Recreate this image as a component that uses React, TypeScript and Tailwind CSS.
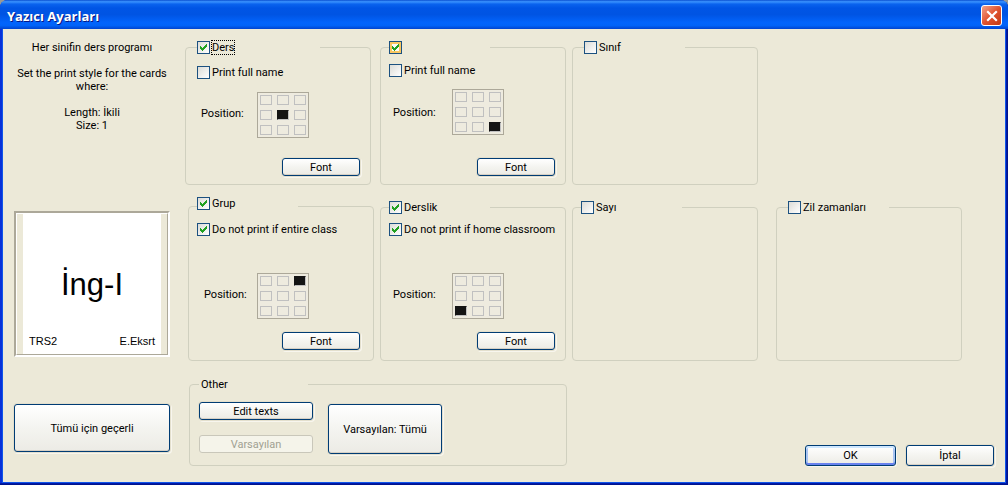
import { useState } from 'react';
import type { ReactNode } from 'react';

type CheckProps = {
    label: string;
    name?: string;
    initial?: boolean;
    hot?: boolean;
    focused?: boolean;
};

const Check = ({ label, name, initial = false, hot = false, focused = false }: CheckProps) => {
    const [checked, setChecked] = useState(initial);

    return (
        <label className="flex h-[13px] items-start gap-[2px] whitespace-nowrap">
            <span className="grid size-[13px] shrink-0">
                <input
                    type="checkbox"
                    aria-label={name}
                    checked={checked}
                    onChange={(e) => setChecked(e.target.checked)}
                    className={`col-start-1 row-start-1 size-[13px] appearance-none border border-[#1c5180] ${
                        hot
                            ? 'bg-[#fbfbf8] shadow-[inset_0_0_0_2px_#fac761]'
                            : 'bg-linear-to-br from-[#dcdcd7] to-white'
                    }`}
                />
                {checked && (
                    <svg
                        viewBox="0 0 13 13"
                        shapeRendering="crispEdges"
                        className="pointer-events-none z-10 col-start-1 row-start-1 size-[13px]"
                    >
                        <path
                            fill="#21a121"
                            d="M3 5h1v1h1v1h1v-1h1v-1h1v-1h1v-1h1v3h-1v1h-1v1h-1v1h-1v1h-1v-1h-1v-1h-1z"
                        />
                    </svg>
                )}
            </span>
            <span className={focused ? 'outline-1 outline-dotted outline-black' : ''}>{label}</span>
        </label>
    );
};

type PushButtonProps = {
    children: ReactNode;
    className: string;
    disabled?: boolean;
    primary?: boolean;
};

const PushButton = ({ children, className, disabled = false, primary = false }: PushButtonProps) => {
    let look =
        'border-[#003c74] bg-linear-to-b from-white via-[#f4f4f0] to-[#ecebe5] shadow-[inset_0_-1px_0_#d6d0c5,0_0_0_1px_#e3dfcd,1px_1px_0_1px_#f8f6ee]';
    if (primary) {
        look =
            'border-[#003c74] bg-linear-to-b from-white to-[#ecebe5] shadow-[inset_0_2px_0_#cee7ff,inset_0_-2px_0_#6982ee,inset_2px_0_0_#a9c4f2,inset_-2px_0_0_#a9c4f2,1px_1px_0_#f8f6ee]';
    }
    if (disabled) {
        look = 'border-[#c9c7ba] bg-[#f5f4ea] text-[#a1a192]';
    }

    return (
        <button
            type="button"
            disabled={disabled}
            className={`flex items-center justify-center rounded-[3px] border whitespace-nowrap ${look} ${className}`}
        >
            {children}
        </button>
    );
};

const CELLS = [0, 1, 2, 3, 4, 5, 6, 7, 8];

// 3x3 picker for the corner of the card where the text goes
const PositionPicker = ({ name, initial }: { name: string; initial: number }) => {
    const [position, setPosition] = useState(initial);

    return (
        <div
            role="radiogroup"
            aria-label="Position"
            className="grid grid-cols-[repeat(3,12px)] gap-[5px] border border-[#aca899] bg-[#eeebdf] p-[2px]"
        >
            {CELLS.map((cell) => (
                <input
                    key={cell}
                    type="radio"
                    name={name}
                    aria-label={`${cell + 1}`}
                    checked={position === cell}
                    onChange={() => setPosition(cell)}
                    className="h-[10px] w-3 appearance-none border border-[#c0c0c0] checked:border-t-[#141414] checked:border-l-[#141414] checked:bg-[#141414] checked:bg-clip-padding"
                />
            ))}
        </div>
    );
};

type GroupProps = {
    legend: ReactNode;
    className: string;
    legendClass?: string;
    children?: ReactNode;
};

const Group = ({ legend, className, legendClass = 'h-3 w-[101px]', children }: GroupProps) => (
    <fieldset className={`min-w-0 rounded-[4px] border border-[#d0d0bf] ${className}`}>
        <legend className={legendClass}>{legend}</legend>
        {children}
    </fieldset>
);

const App = () => {
    return (
        <div className="bg-[#9a9a94]">
            <div className="flex min-h-screen flex-col rounded-t-[8px] bg-[#0f55ea] font-[Roboto,'Noto_Sans',sans-serif] text-[11px] leading-[13px] text-black shadow-[inset_-1px_-1px_0_#00138c,inset_-2px_-2px_0_#0019a8,inset_2px_0_0_#0831d9]">
                <header className="flex h-[29px] items-center justify-between rounded-t-[7px] bg-[linear-gradient(to_bottom,#0a4fd0_0%,#3a93ff_6%,#0a63ee_14%,#0055e5_28%,#0054e3_50%,#0264fc_78%,#0163f8_88%,#0144cf_100%)] pr-[6px] pl-[7px]">
                    <h1 className="pt-[3px] font-['Open_Sans','Noto_Sans',sans-serif] text-[13px] leading-4 font-bold text-white [text-shadow:1px_1px_0_#0a1883]">
                        Yazıcı Ayarları
                    </h1>
                    <button
                        type="button"
                        aria-label="Close"
                        className="mt-[2px] flex size-[21px] items-center justify-center rounded-[3px] border border-white bg-linear-to-br from-[#f0a088] via-[#e0532f] to-[#c43a12]"
                    >
                        <svg viewBox="0 0 12 12" className="size-3 shrink-0">
                            <path d="M1.2 1.2l9.6 9.6M10.8 1.2l-9.6 9.6" stroke="#fff" strokeWidth="2.2" />
                        </svg>
                    </button>
                </header>

                <main className="mx-[3px] mb-[3px] grid flex-1 grid-cols-[156px_1fr] content-start gap-x-[15px] bg-[#ece9d8] pt-3 pl-[11px]">
                    <div className="text-center">
                        <p>Her sinifin ders programı</p>
                        <p className="mt-[13px]">Set the print style for the cards where:</p>
                        <p className="mt-[13px]">Length: İkili</p>
                        <p>Size: 1</p>
                    </div>

                    <div className="flex pr-[43px]">
                        <Group
                            className="h-36 grow basis-[186px] pr-[10px] pl-[11px]"
                            legendClass="h-3 w-[123px]"
                            legend={<Check label="Ders" initial focused />}
                        >
                            <div className="pt-[13px]">
                                <Check label="Print full name" />
                            </div>
                            <div className="mt-[13px] flex items-center pl-1">
                                <span className="w-14 pb-1">Position:</span>
                                <PositionPicker name="subject" initial={4} />
                            </div>
                            <PushButton className="mt-5 ml-auto h-[18px] w-[78px]">Font</PushButton>
                        </Group>
                        <Group
                            className="ml-[9px] h-36 grow basis-[186px] pr-[10px] pl-2"
                            legend={<Check label="" name="Teacher" initial hot />}
                        >
                            <div className="pt-[11px]">
                                <Check label="Print full name" />
                            </div>
                            <div className="mt-3 flex items-center pl-1">
                                <span className="w-[59px]">Position:</span>
                                <PositionPicker name="teacher" initial={8} />
                            </div>
                            <PushButton className="mt-[23px] ml-auto h-[18px] w-[78px]">Font</PushButton>
                        </Group>
                        <Group
                            className="ml-[6px] h-36 grow basis-[186px] pl-[11px]"
                            legend={<Check label="Sınıf" />}
                        />
                        <div className="ml-[18px] grow basis-[186px]" />
                    </div>

                    <div className="mt-[26px] h-[146px] border-2 border-t-[#aca899] border-r-white border-b-white border-l-[#aca899]">
                        <div className="flex h-full border border-t-white border-r-[#aca899] border-b-[#aca899] border-l-white px-[6px]">
                            <div className="flex flex-1 flex-col justify-between bg-white px-[6px] pt-[53px] pb-[6px] font-['Liberation_Sans',sans-serif]">
                                <p className="text-center text-[31px] leading-9">İng-I</p>
                                <p className="flex justify-between">
                                    <span>TRS2</span>
                                    <span>E.Eksrt</span>
                                </p>
                            </div>
                        </div>
                    </div>

                    <div className="mt-3 flex items-end pr-[43px] pl-[3px]">
                        <Group
                            className="h-[164px] grow basis-[186px] pr-[13px] pl-2"
                            legendClass="h-[18px] w-[101px]"
                            legend={<Check label="Grup" initial />}
                        >
                            <div className="pt-2">
                                <Check label="Do not print if entire class" initial />
                            </div>
                            <div className="mt-[37px] flex items-center pl-[7px]">
                                <span className="w-[53px] pb-1">Position:</span>
                                <PositionPicker name="group" initial={2} />
                            </div>
                            <PushButton className="mt-[13px] ml-auto h-[18px] w-[78px]">Font</PushButton>
                        </Group>
                        <Group
                            className="ml-[6px] h-40 grow basis-[186px] pr-[10px] pl-2"
                            legend={<Check label="Derslik" initial />}
                        >
                            <div className="pt-[10px]">
                                <Check label="Do not print if home classroom" initial />
                            </div>
                            <div className="mt-[37px] flex items-center pl-1">
                                <span className="w-[59px] pb-1">Position:</span>
                                <PositionPicker name="classroom" initial={6} />
                            </div>
                            <PushButton className="mt-[13px] ml-auto h-[18px] w-[78px]">Font</PushButton>
                        </Group>
                        <Group className="ml-[6px] h-40 grow basis-[186px] pl-2" legend={<Check label="Sayı" />} />
                        <Group
                            className="ml-[18px] h-40 grow basis-[186px] pl-[11px]"
                            legend={<Check label="Zil zamanları" />}
                        />
                    </div>

                    <PushButton className="mt-[43px] h-12">Tümü için geçerli</PushButton>

                    <div className="mt-[17px] flex items-end justify-between pr-[11px] pl-1">
                        <Group
                            className="h-[88px] w-[378px] pl-[9px]"
                            legendClass="h-[13px] w-[109px] px-[2px]"
                            legend="Other"
                        >
                            <div className="flex gap-[15px] pt-[11px]">
                                <div className="flex flex-col gap-[15px]">
                                    <PushButton className="h-[18px] w-[114px]">Edit texts</PushButton>
                                    <PushButton className="h-[18px] w-[114px]" disabled>
                                        Varsayılan
                                    </PushButton>
                                </div>
                                <PushButton className="mt-[2px] h-[50px] w-[114px]">Varsayılan: Tümü</PushButton>
                            </div>
                        </Group>
                        <div className="flex gap-[10px]">
                            <PushButton className="h-[21px] w-[91px]" primary>
                                OK
                            </PushButton>
                            <PushButton className="h-[21px] w-[88px]">İptal</PushButton>
                        </div>
                    </div>
                </main>
            </div>
        </div>
    );
};

export default App;
